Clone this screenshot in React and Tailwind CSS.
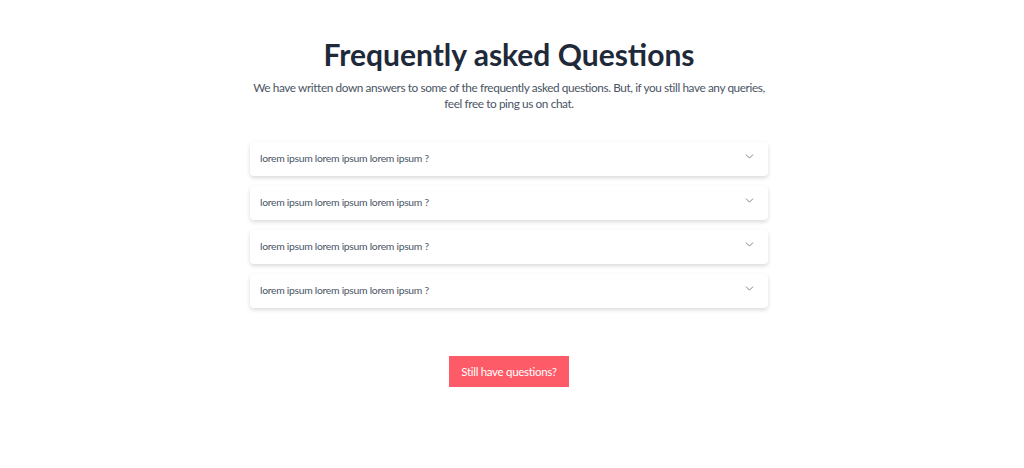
import { ChevronDown } from 'lucide-react';

const questions = [
  'lorem ipsum lorem ipsum lorem ipsum ?',
  'lorem ipsum lorem ipsum lorem ipsum ?',
  'lorem ipsum lorem ipsum lorem ipsum ?',
  'lorem ipsum lorem ipsum lorem ipsum ?',
];

const FaqItem = ({ text }) => (
  <div className="bg-white rounded shadow-[0_2px_4px_rgba(0,0,0,0.15)] h-[34px] pl-[10px] pr-[12px] flex items-center justify-between">
    <span className="text-[10.4px] tracking-[-0.3px] text-gray-600">{text}</span>
    <ChevronDown className="w-[13px] h-[13px] text-gray-500 -mt-[5px]" strokeWidth={1.6} />
  </div>
);

const App = () => {
  return (
    <div className="min-h-screen bg-white font-['Lato',sans-serif] pr-[6px]">
      <div className="w-[518px] mx-auto pt-[34px] flex flex-col items-center">
        <h1 className="text-[30px] leading-[40px] font-bold text-gray-800">Frequently asked Questions</h1>
        <p className="mt-[6px] text-[11.8px] tracking-[-0.4px] leading-[16px] text-gray-600 text-center w-[516px]">
          We have written down answers to some of the frequently asked questions. But, if you still have any queries, feel free to ping us on chat.
        </p>
        <div className="w-full mt-[30px] flex flex-col gap-[10px]">
          {questions.map((q, i) => (
            <FaqItem key={i} text={q} />
          ))}
        </div>
        <button className="mt-[48px] h-[31px] px-[12px] bg-[#fe5b68] text-white text-[11.5px] tracking-[-0.3px]">
          Still have questions?
        </button>
      </div>
    </div>
  );
};

export default App;
